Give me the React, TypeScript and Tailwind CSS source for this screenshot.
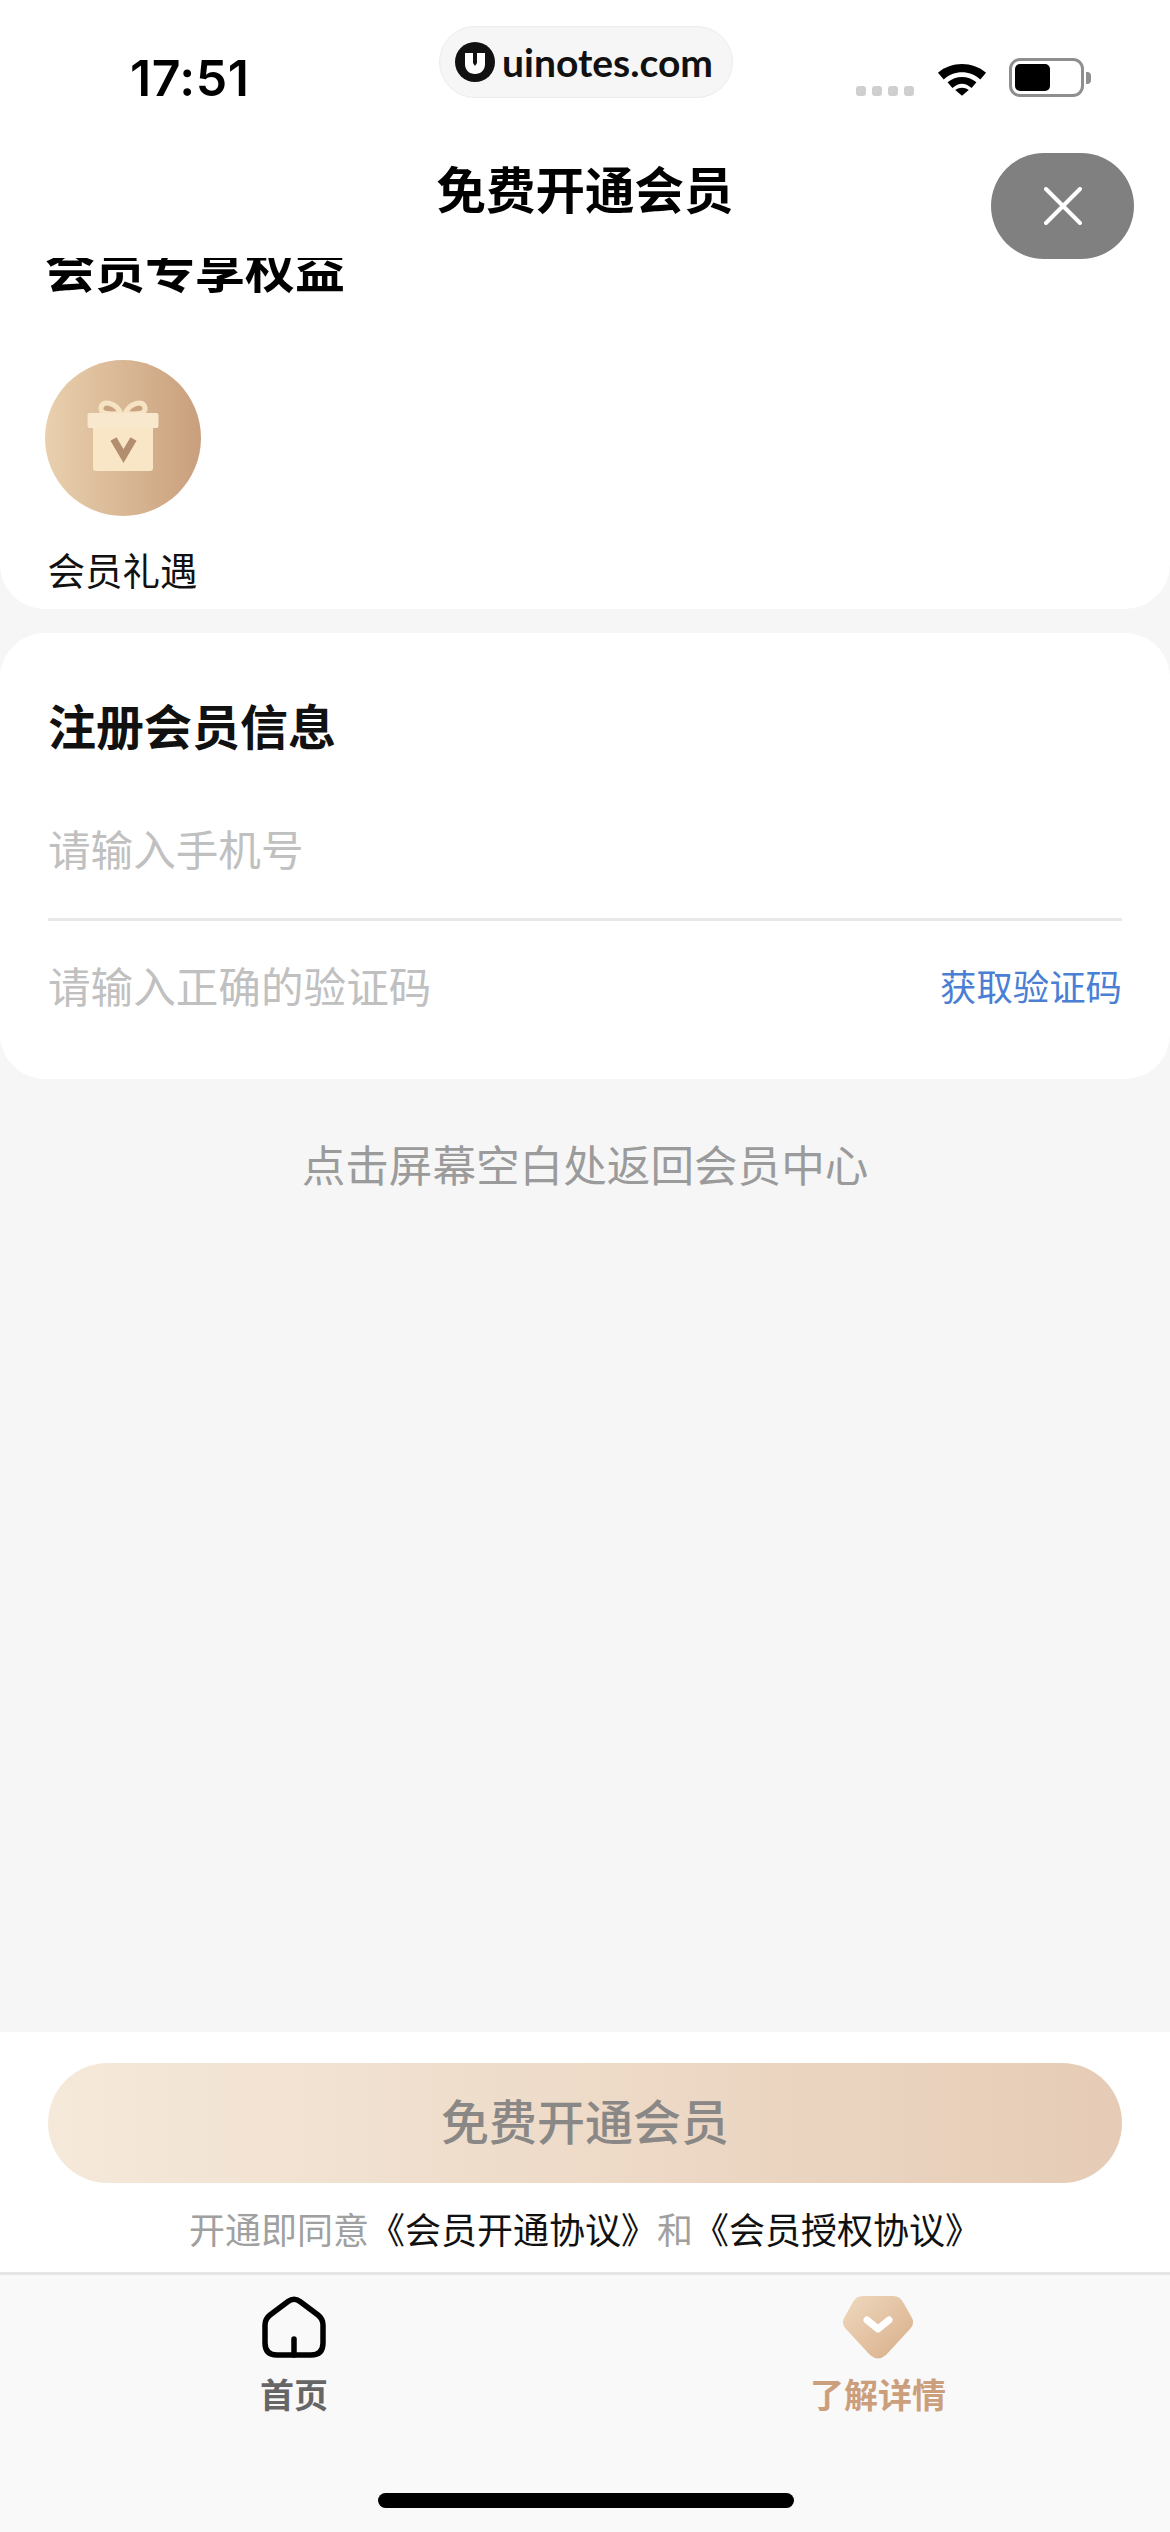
import React from 'react';

const cjk = "font-['Inter','Noto_Sans_CJK_SC',sans-serif]";

const StatusBar = () => (
  <div className="flex h-[130px] items-start justify-between pl-[130px] pr-[79px]">
    <span className="mt-[48px] font-['Inter',sans-serif] text-[50px] leading-[60px] font-semibold tracking-[0.5px] text-black">17:51</span>
    <div className="mt-[58px] flex items-center">
      <div className="mt-[27px] flex gap-[6px]">
        <span className="h-[10px] w-[10px] rounded-[3px] bg-[#cfcfcf]" />
        <span className="h-[10px] w-[10px] rounded-[3px] bg-[#cfcfcf]" />
        <span className="h-[10px] w-[10px] rounded-[3px] bg-[#cfcfcf]" />
        <span className="h-[10px] w-[10px] rounded-[3px] bg-[#cfcfcf]" />
      </div>
      <svg className="ml-[23px]" width="50" height="37" viewBox="0 0 52 38">
        <path d="M1 14 C15 2 37 2 51 14 L45 21 C34 11 18 11 7 21 Z" fill="#000" />
        <path d="M11 24 C20 16.5 32 16.5 41 24 L36 30 C29 24 23 24 16 30 Z" fill="#000" />
        <path d="M19 32 C23.5 29 28.5 29 33 32 L26 38 Z" fill="#000" />
      </svg>
      <div className="ml-[22px] flex items-center">
        <div className="h-[39px] w-[75px] rounded-[11px] border-[3px] border-[#8e8e8e] p-[3px]">
          <div className="h-full w-[35px] rounded-[5px] bg-black" />
        </div>
        <span className="ml-[2px] h-[12px] w-[5px] rounded-r-[4px] bg-[#8e8e8e]" />
      </div>
    </div>
  </div>
);

const Watermark = () => (
  <div className="absolute top-[26px] left-[439px] flex h-[72px] w-[294px] items-center rounded-[36px] border border-[#ececec] bg-[#f6f6f6] pl-[15px]">
    <svg width="40" height="40" viewBox="0 0 40 40">
      <circle cx="20" cy="20" r="20" fill="#111" />
      <path d="M10 11 H30 V22 C30 28 26 32 20 32 C14 32 10 28 10 22 Z" fill="#fff" />
      <path d="M18 11 H22 V21 L20 24 L18 21 Z" fill="#111" />
    </svg>
    <span className="ml-[7px] font-['Lato',sans-serif] text-[39px] leading-[44px] font-bold text-[#111]">uinotes.com</span>
  </div>
);

const GiftBadge = () => (
  <div className="flex h-[156px] w-[156px] items-center justify-center rounded-full bg-gradient-to-r from-[#e9d0ae] to-[#c99f7c]">
    <svg className="-mt-[4px]" width="72" height="72" viewBox="0 0 72 72">
      <path d="M34 14 C30 3 15 -1 14 8 C13 14 24 15 34 13" fill="#c9a27f" stroke="#f6e3c4" strokeWidth="5" />
      <path d="M38 14 C42 3 57 -1 58 8 C59 14 48 15 38 13" fill="#c9a27f" stroke="#f6e3c4" strokeWidth="5" />
      <rect x="0.5" y="13" width="71" height="15" rx="2" fill="#f8e8ce" />
      <path d="M6 28 H66 V68 Q66 71 63 71 H9 Q6 71 6 68 Z" fill="#f9e6c6" />
      <path d="M26.5 39 L36.5 56 L46.5 39" fill="none" stroke="#b28e6e" strokeWidth="7" />
    </svg>
  </div>
);

const HomeIcon = () => (
  <svg width="64" height="64" viewBox="0 0 64 64" fill="none" stroke="#000" strokeWidth="5.5" strokeLinecap="round" strokeLinejoin="round">
    <path d="M26 6.5 Q32 2 38 6.5 L56 20 Q61 24 61 30 V48 Q61 60 49 60 H15 Q3 60 3 48 V30 Q3 24 8 20 Z" />
    <path d="M32 44 V60" />
  </svg>
);

const DetailIcon = () => (
  <svg width="72" height="64" viewBox="0 0 72 64">
    <defs>
      <linearGradient id="detailFill" x1="0" y1="0" x2="1" y2="1">
        <stop offset="0" stopColor="#efd9bf" />
        <stop offset="1" stopColor="#d8ad88" />
      </linearGradient>
    </defs>
    <path d="M21 1 H51 Q58 1 61 7 L70 23 Q73 29 68 34 L44 60 Q36 67 28 60 L4 34 Q-1 29 2 23 L11 7 Q14 1 21 1 Z" fill="url(#detailFill)" />
    <path d="M25 25 L36 34 L47 25" fill="none" stroke="#fff" strokeWidth="7" strokeLinecap="round" strokeLinejoin="round" />
  </svg>
);

const App = () => {
  return (
    <div className={`relative flex h-[2532px] w-[1170px] flex-col overflow-hidden bg-[#f6f6f6] ${cjk}`}>
      <header className="h-[258px] shrink-0 bg-white">
        <StatusBar />
        <h1 className="mt-[31px] text-center text-[49.5px] leading-[60px] font-semibold text-black">免费开通会员</h1>
      </header>
      <Watermark />
      <button className="absolute top-[153px] left-[991px] flex h-[106px] w-[143px] items-center justify-center rounded-[53px] bg-[#808080]">
        <svg width="38" height="38" viewBox="0 0 38 38" stroke="#fff" strokeWidth="4" strokeLinecap="round">
          <path d="M2 2 L36 36 M36 2 L2 36" />
        </svg>
      </button>

      <section className="h-[351px] shrink-0 overflow-hidden rounded-b-[45px] bg-white pl-[45px]">
        <h2 className="-mt-[18px] text-[50px] leading-[60px] font-bold text-black">会员专享权益</h2>
        <div className="mt-[60px] flex w-[156px] flex-col items-center">
          <GiftBadge />
          <span className="mt-[32px] -ml-[1px] text-[37.5px] leading-[48px] whitespace-nowrap text-[#111]">会员礼遇</span>
        </div>
      </section>

      <section className="mt-[24px] h-[446px] shrink-0 rounded-[45px] bg-white px-[48px] pt-[65px]">
        <h2 className="text-[48px] leading-[60px] font-semibold text-[#111]">注册会员信息</h2>
        <div className="mt-[46px] h-[117px] border-b-[3px] border-[#e8e8e8] pt-[19px]">
          <span className="block text-[42.6px] leading-[56px] text-[#c0c0c0]">请输入手机号</span>
        </div>
        <div className="flex h-[134px] items-center justify-between">
          <span className="text-[42.6px] leading-[56px] text-[#c0c0c0]">请输入正确的验证码</span>
          <span className="text-[36.4px] leading-[48px] text-[#4a7fd4]">获取验证码</span>
        </div>
      </section>

      <p className="mt-[58px] text-center text-[43.6px] leading-[60px] text-[#9b9b9b]">点击屏幕空白处返回会员中心</p>

      <div className="flex-1" />

      <section className="h-[240px] shrink-0 bg-white px-[48px] pt-[31px]">
        <button className="h-[120px] w-full rounded-[60px] bg-gradient-to-r from-[#f5e9da] to-[#e6ccb6] text-[48px] font-medium text-[#8a8886]">免费开通会员</button>
        <p className="mt-[24px] text-center text-[36px] leading-[48px] whitespace-nowrap text-[#a0a0a0]">
          开通即同意<span className="text-[#111]">《会员开通协议》</span>和<span className="text-[#111]">《会员授权协议》</span>
        </p>
      </section>

      <nav className="relative h-[260px] shrink-0 border-t-[3px] border-[#e6e6e6] bg-[#f9f9f9]">
        <div className="flex justify-between pr-[142px] pl-[144px] pt-[20px]">
          <a href="#" className="flex w-[300px] flex-col items-center">
            <HomeIcon />
            <span className="mt-[13px] text-[34px] leading-[48px] font-semibold text-[#666]">首页</span>
          </a>
          <a href="#" className="flex w-[300px] flex-col items-center">
            <DetailIcon />
            <span className="mt-[13px] text-[34px] leading-[48px] font-semibold text-[#cc9f7c]">了解详情</span>
          </a>
        </div>
        <div className="absolute bottom-[24px] left-[378px] h-[15px] w-[416px] rounded-full bg-black" />
      </nav>
    </div>
  );
};

export default App;
